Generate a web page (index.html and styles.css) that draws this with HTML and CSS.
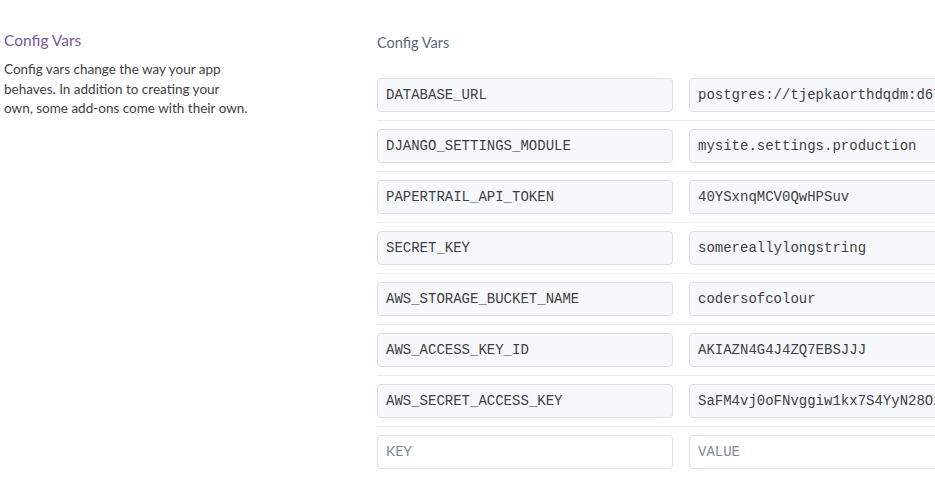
FILE: index.html
```html
<!DOCTYPE html>
<html>
<head>
<meta charset="utf-8">
<link rel="stylesheet" href="styles.css">
</head>
<body>
<div class="layout">
  <aside class="aside">
    <h2 class="aside-title">Config Vars</h2>
    <p class="aside-desc">Config vars change the way your app<br>behaves. In addition to creating your<br>own, some add-ons come with their own.</p>
  </aside>
  <main class="main">
    <div class="label">Config Vars</div>
    <div class="rows">
      <div class="row"><input class="field" value="DATABASE_URL" readonly><input class="field" value="postgres://tjepkaorthdqdm:d67a1e0b2c9f" readonly></div>
      <div class="row"><input class="field" value="DJANGO_SETTINGS_MODULE" readonly><input class="field" value="mysite.settings.production" readonly></div>
      <div class="row"><input class="field" value="PAPERTRAIL_API_TOKEN" readonly><input class="field" value="40YSxnqMCV0QwHPSuv" readonly></div>
      <div class="row"><input class="field" value="SECRET_KEY" readonly><input class="field" value="somereallylongstring" readonly></div>
      <div class="row"><input class="field" value="AWS_STORAGE_BUCKET_NAME" readonly><input class="field" value="codersofcolour" readonly></div>
      <div class="row"><input class="field" value="AWS_ACCESS_KEY_ID" readonly><input class="field" value="AKIAZN4G4J4ZQ7EBSJJJ" readonly></div>
      <div class="row"><input class="field" value="AWS_SECRET_ACCESS_KEY" readonly><input class="field" value="SaFM4vj0oFNvggiw1kx7S4YyN28OzQ" readonly></div>
      <div class="row row-new"><input class="field field-new field-key" placeholder="KEY"><input class="field field-new" placeholder="VALUE"></div>
    </div>
  </main>
</div>
</body>
</html>
```

FILE: styles.css
```css
html, body {
  margin: 0;
  padding: 0;
  overflow: hidden;
  background: #ffffff;
}

body {
  font-family: Lato, "Open Sans", sans-serif;
  color: #3f3f44;
}

.layout {
  display: grid;
  grid-template-columns: 377px 1fr;
}

.aside {
  padding: 30px 0 0 4px;
}

.aside-title {
  margin: 0 0 10px;
  font-size: 15.5px;
  line-height: 20px;
  font-weight: 400;
  color: #79589f;
}

.aside-desc {
  margin: 0;
  white-space: nowrap;
  font-size: 13.5px;
  line-height: 19.5px;
  color: #3f3f44;
}

.main {
  padding-top: 33px;
  min-width: 0;
}

.label {
  font-size: 14.5px;
  line-height: 20px;
  color: #596981;
  margin-bottom: 25px;
}

.rows {
  display: flex;
  flex-direction: column;
}

.row {
  display: flex;
  gap: 16px;
  padding-bottom: 8px;
  margin-bottom: 8px;
  border-bottom: 1px solid #e6e9ef;
}

.row-new {
  border-bottom: none;
}

.field {
  flex: 0 0 296px;
  box-sizing: border-box;
  height: 34px;
  margin: 0;
  padding: 0 8px;
  border: 1px solid #d9dee7;
  border-radius: 4px;
  background: #f7f8fb;
  font-family: "Liberation Mono", monospace;
  font-size: 14px;
  color: #3f3f44;
  outline: none;
}

.field-new {
  background: #ffffff;
}

.field::placeholder {
  color: #7c8aa0;
  opacity: 1;
}

.field-key::placeholder {
  font-family: Lato, "Open Sans", sans-serif;
}
```
